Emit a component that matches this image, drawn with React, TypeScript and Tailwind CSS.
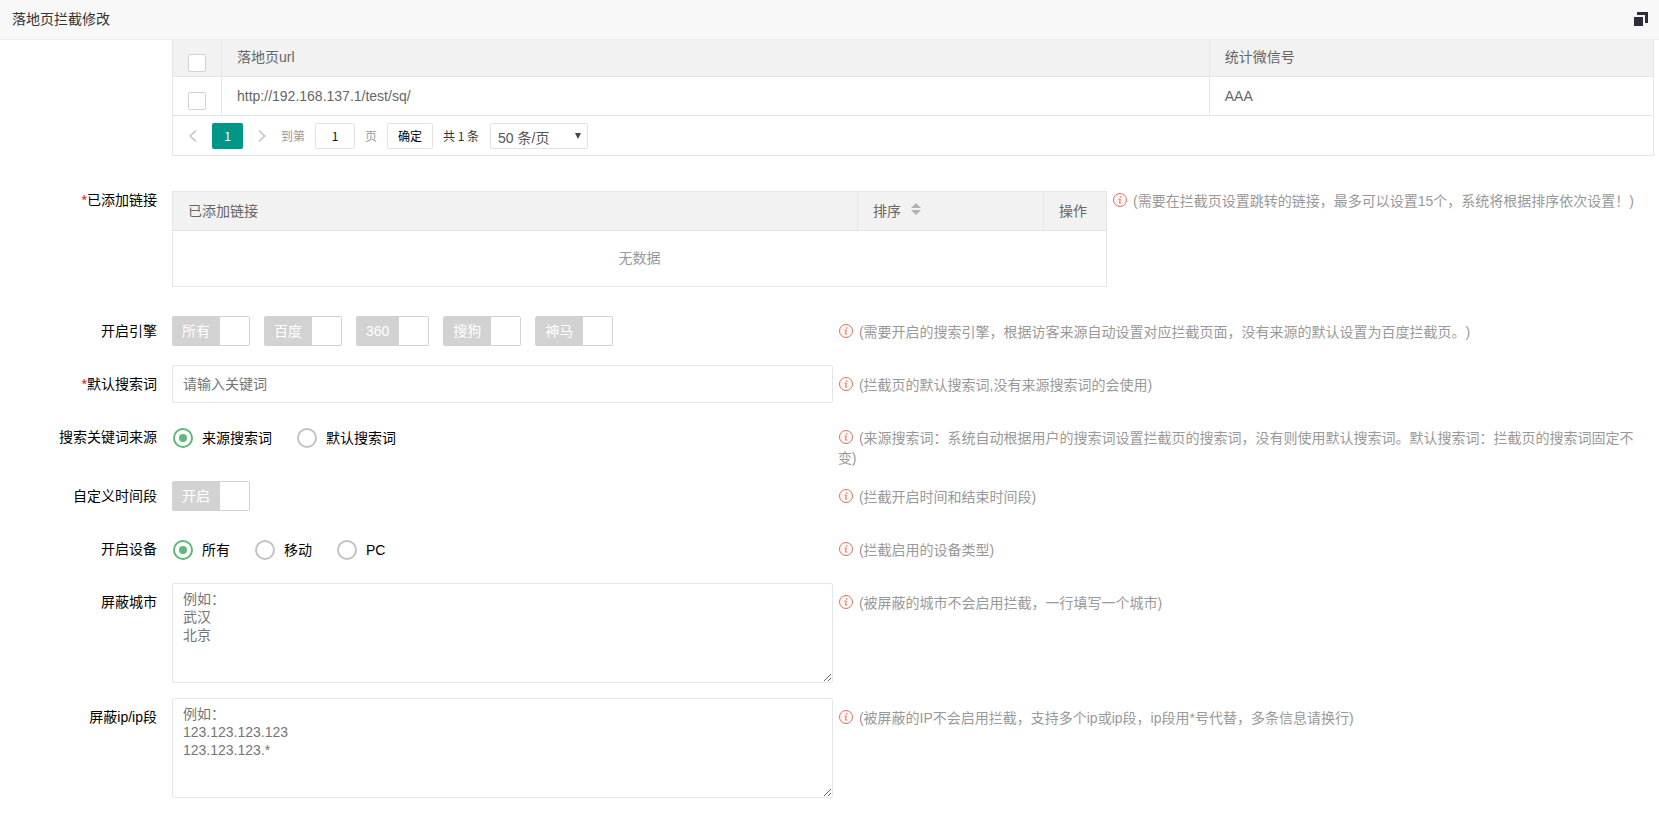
import { useId, type ReactNode } from "react";

const links = [{ url: "http://192.168.137.1/test/sq/", wechat: "AAA" }];
const engines = ["所有", "百度", "360", "搜狗", "神马"];

function InfoIcon() {
  return (
    <svg viewBox="0 0 14 14" className="mr-[6px] ml-px inline-block size-[14px] align-[-1px]" aria-hidden="true">
      <circle cx="7" cy="7" r="6.5" fill="#fff8f5" stroke="#e2705c" />
      <circle cx="7.7" cy="4" r="0.8" fill="#e2705c" />
      <path d="M5.9 6.1h1.4L6.5 10h1.2" fill="none" stroke="#e2705c" strokeWidth="1" strokeLinecap="round" />
    </svg>
  );
}

function Help({ children }: { children: ReactNode }) {
  return (
    <p className="min-w-0 flex-1 pt-[10px] pr-[14px] leading-5 text-[#999] [text-spacing-trim:space-all]">
      <InfoIcon />
      {children}
    </p>
  );
}

function Row({ label, htmlFor, required, help, wide, children }: {
  label: string;
  htmlFor?: string;
  required?: boolean;
  help: string;
  wide?: boolean;
  children: ReactNode;
}) {
  const title = (
    <>
      {required && <span className="text-[#f00]">*</span>}
      {label}
    </>
  );
  const titleClass = "w-[172px] shrink-0 pt-[9px] pr-[15px] text-right leading-5";
  return (
    <div className="flex min-h-[38px] items-start">
      {htmlFor ? (
        <label htmlFor={htmlFor} className={titleClass}>{title}</label>
      ) : (
        <div className={titleClass}>{title}</div>
      )}
      <div className="flex min-w-0 flex-1 gap-[5px]">
        <div className={wide ? "w-[935px] shrink-0" : "w-4/9 shrink-0"}>{children}</div>
        <Help>{help}</Help>
      </div>
    </div>
  );
}

function Switch({ label }: { label: string }) {
  return (
    <label className="flex h-[30px] cursor-pointer items-stretch overflow-hidden rounded-[2px] border border-[#d2d2d2] bg-[#d2d2d2] text-white has-checked:flex-row-reverse has-checked:border-[#5fb878] has-checked:bg-[#5fb878]">
      <input type="checkbox" role="switch" className="sr-only" />
      <span className="pr-[10px] pl-[9px] leading-7">{label}</span>
      <span className="w-[29px] bg-white" />
    </label>
  );
}

function Radios({ options }: { options: string[] }) {
  const name = useId();
  return (
    <div className="flex h-10 items-center gap-[25px] pl-px">
      {options.map((option, i) => (
        <label key={option} className="flex cursor-pointer items-center gap-[9px]">
          <input
            type="radio"
            name={name}
            defaultChecked={i === 0}
            className="size-5 appearance-none rounded-full border-2 border-[#c2c2c2] bg-clip-content p-1 checked:border-[#5fb878] checked:bg-[#5fb878]"
          />
          {option}
        </label>
      ))}
    </div>
  );
}

function Tick({ label }: { label: string }) {
  return (
    <input
      type="checkbox"
      aria-label={label}
      className="mx-auto mt-[10px] block size-[18px] appearance-none rounded-[2px] border border-[#d2d2d2] bg-white checked:border-[#5fb878] checked:bg-[#5fb878]"
    />
  );
}

function Chevron({ d }: { d: string }) {
  return (
    <svg viewBox="0 0 10 14" className="h-[14px] w-[10px]" fill="none" stroke="#c4c4c4" strokeWidth="1.6" aria-hidden="true">
      <path d={d} />
    </svg>
  );
}

function Pager() {
  return (
    <div className="flex h-10 items-center border border-t-0 border-[#e6e6e6] px-[15px] pt-px font-['Noto_Sans_CJK_SC',sans-serif] text-xs">
      <button type="button" aria-label="上一页" className="w-[10px]">
        <Chevron d="M8 1.5 2.2 7 8 12.5" />
      </button>
      <button type="button" className="ml-[14px] h-[26px] w-[31px] rounded-[2px] bg-[#009688] text-white">1</button>
      <button type="button" aria-label="下一页" className="ml-[14px] w-[10px]">
        <Chevron d="M2 1.5 7.8 7 2 12.5" />
      </button>
      <label className="ml-[14px] flex items-center text-[#999]">
        到第
        <input type="text" defaultValue="1" className="mx-[10px] h-[26px] w-10 rounded-[2px] border border-[#e2e2e2] text-center text-[#111]" />
        页
      </label>
      <button type="button" className="ml-[10px] h-[26px] w-[46px] rounded-[2px] border border-[#e2e2e2] text-black">确定</button>
      <span className="ml-[10px] text-[#333]">共 1 条</span>
      <div className="relative ml-[11px]">
        <select
          aria-label="每页条数"
          className="h-[26px] w-[98px] appearance-none rounded-[2px] border border-[#e2e2e2] bg-white pt-1 pl-[7px] font-['Liberation_Sans','Noto_Sans_CJK_SC',sans-serif] text-sm leading-5 text-[#555]"
        >
          <option>50 条/页</option>
          <option>100 条/页</option>
        </select>
        <svg viewBox="0 0 6 6" className="pointer-events-none absolute top-[10px] right-[7px] size-[6px]" aria-hidden="true">
          <path d="M0 0h6L3 6z" fill="#444" />
        </svg>
      </div>
    </div>
  );
}

export default function App() {
  const areaClass =
    "block h-[100px] w-full resize rounded-[2px] border border-[#e6e6e6] px-[10px] py-[6px] leading-[18px] placeholder:text-[#757575]";
  return (
    <div className="min-h-screen bg-white font-['Liberation_Sans','Noto_Sans_CJK_SC',sans-serif] text-sm text-black">
      <header className="flex h-10 items-center justify-between border-b border-[#eee] bg-[#f8f8f8] pr-[11px] pb-[2px] pl-3">
        <h1 className="text-[#333]">落地页拦截修改</h1>
        <button type="button" aria-label="还原窗口">
          <svg viewBox="0 0 14 14" className="size-[14px]" fill="#2e2d3c" aria-hidden="true">
            <path d="M3 0h11v11h-3V3H3z" />
            <path d="M0 5h9v9H0z" />
          </svg>
        </button>
      </header>

      <main className="pb-4">
        <section className="mr-[5px] ml-[172px]">
          <table className="w-full table-fixed border-collapse text-left text-[#666]">
            <colgroup>
              <col className="w-[49px]" />
              <col />
              <col className="w-[30%]" />
            </colgroup>
            <thead>
              <tr className="h-9">
                <th className="relative border border-t-0 border-[#e6e6e6] bg-[#f2f2f2] shadow-[3px_0_4px_rgba(0,0,0,0.06)]"><Tick label="全选" /></th>
                <th className="border border-t-0 border-[#e6e6e6] bg-[#f2f2f2] px-[15px] pb-px font-normal">落地页url</th>
                <th className="border border-t-0 border-[#e6e6e6] bg-[#f2f2f2] px-[15px] pb-px font-normal">统计微信号</th>
              </tr>
            </thead>
            <tbody>
              {links.map((link) => (
                <tr key={link.url} className="h-[39px]">
                  <td className="relative border border-[#e6e6e6] bg-white shadow-[3px_0_4px_rgba(0,0,0,0.06)]"><Tick label={link.url} /></td>
                  <td className="border border-[#e6e6e6] px-[15px]">{link.url}</td>
                  <td className="border border-[#e6e6e6] px-[15px]">{link.wechat}</td>
                </tr>
              ))}
            </tbody>
          </table>
          <Pager />
        </section>

        <form className="mt-[25px] flex flex-col gap-[15px]" onSubmit={(e) => e.preventDefault()}>
          <Row label="已添加链接" required wide help="(需要在拦截页设置跳转的链接，最多可以设置15个，系统将根据排序依次设置！)">
            <div className="py-[10px]">
              <table className="w-full table-fixed border-collapse text-left text-[#666]">
                <colgroup>
                  <col />
                  <col className="w-[186px]" />
                  <col className="w-[63px]" />
                </colgroup>
                <thead>
                  <tr className="h-[39px] bg-[#f2f2f2]">
                    <th className="border border-[#e6e6e6] px-[15px] font-normal">已添加链接</th>
                    <th className="border border-[#e6e6e6] px-[15px] font-normal">
                      <button type="button" className="flex items-center gap-[10px]">
                        排序
                        <svg viewBox="0 0 10 12" className="mb-1 h-3 w-[10px]" fill="#b2b2b2" aria-hidden="true">
                          <path d="M5 0l5 5H0zM0 7h10l-5 5z" />
                        </svg>
                      </button>
                    </th>
                    <th className="border border-[#e6e6e6] px-[15px] font-normal">操作</th>
                  </tr>
                </thead>
                <tbody>
                  <tr className="h-14">
                    <td colSpan={3} className="border border-[#e6e6e6] text-center text-[#999]">无数据</td>
                  </tr>
                </tbody>
              </table>
            </div>
          </Row>

          <Row label="开启引擎" help="(需要开启的搜索引擎，根据访客来源自动设置对应拦截页面，没有来源的默认设置为百度拦截页。)">
            <div className="flex gap-[14px] pt-1">
              {engines.map((engine) => (
                <Switch key={engine} label={engine} />
              ))}
            </div>
          </Row>

          <Row label="默认搜索词" htmlFor="keyword" required help="(拦截页的默认搜索词,没有来源搜索词的会使用)">
            <input
              id="keyword"
              type="text"
              placeholder="请输入关键词"
              className="block h-[38px] w-full rounded-[2px] border border-[#e6e6e6] px-[10px] placeholder:text-[#757575]"
            />
          </Row>

          <div className="-mb-[6px]">
            <Row label="搜索关键词来源" help="(来源搜索词：系统自动根据用户的搜索词设置拦截页的搜索词，没有则使用默认搜索词。默认搜索词：拦截页的搜索词固定不变)">
              <Radios options={["来源搜索词", "默认搜索词"]} />
            </Row>
          </div>

          <Row label="自定义时间段" help="(拦截开启时间和结束时间段)">
            <div className="flex pt-1">
              <Switch label="开启" />
            </div>
          </Row>

          <div className="-mb-[2px]">
            <Row label="开启设备" help="(拦截启用的设备类型)">
              <Radios options={["所有", "移动", "PC"]} />
            </Row>
          </div>

          <Row label="屏蔽城市" htmlFor="cities" help="(被屏蔽的城市不会启用拦截，一行填写一个城市)">
            <textarea id="cities" placeholder={"例如：\n武汉\n北京"} className={areaClass} />
          </Row>

          <Row label="屏蔽ip/ip段" htmlFor="ips" help="(被屏蔽的IP不会启用拦截，支持多个ip或ip段，ip段用*号代替，多条信息请换行)">
            <textarea id="ips" placeholder={"例如：\n123.123.123.123\n123.123.123.*"} className={areaClass} />
          </Row>
        </form>
      </main>
    </div>
  );
}
